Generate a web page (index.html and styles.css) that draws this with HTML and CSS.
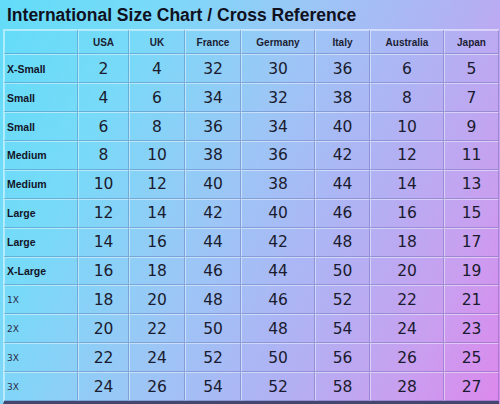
FILE: index.html
```html
<!DOCTYPE html>
<html>
<head>
<meta charset="utf-8">
<link rel="stylesheet" href="styles.css">
</head>
<body>
<div class="page">
  <h1 class="title">International Size Chart / Cross Reference</h1>
  <table class="chart">
    <colgroup>
      <col class="c-label"><col class="c-usa"><col class="c-uk"><col class="c-fr"><col class="c-de"><col class="c-it"><col class="c-au"><col class="c-jp">
    </colgroup>
    <thead>
      <tr><th></th><th>USA</th><th>UK</th><th>France</th><th>Germany</th><th>Italy</th><th>Australia</th><th>Japan</th></tr>
    </thead>
    <tbody>
      <tr><th>X-Small</th><td>2</td><td>4</td><td>32</td><td>30</td><td>36</td><td>6</td><td>5</td></tr>
      <tr><th>Small</th><td>4</td><td>6</td><td>34</td><td>32</td><td>38</td><td>8</td><td>7</td></tr>
      <tr><th>Small</th><td>6</td><td>8</td><td>36</td><td>34</td><td>40</td><td>10</td><td>9</td></tr>
      <tr><th>Medium</th><td>8</td><td>10</td><td>38</td><td>36</td><td>42</td><td>12</td><td>11</td></tr>
      <tr><th>Medium</th><td>10</td><td>12</td><td>40</td><td>38</td><td>44</td><td>14</td><td>13</td></tr>
      <tr><th>Large</th><td>12</td><td>14</td><td>42</td><td>40</td><td>46</td><td>16</td><td>15</td></tr>
      <tr><th>Large</th><td>14</td><td>16</td><td>44</td><td>42</td><td>48</td><td>18</td><td>17</td></tr>
      <tr><th>X-Large</th><td>16</td><td>18</td><td>46</td><td>44</td><td>50</td><td>20</td><td>19</td></tr>
      <tr><th class="plus">1X</th><td>18</td><td>20</td><td>48</td><td>46</td><td>52</td><td>22</td><td>21</td></tr>
      <tr><th class="plus">2X</th><td>20</td><td>22</td><td>50</td><td>48</td><td>54</td><td>24</td><td>23</td></tr>
      <tr><th class="plus">3X</th><td>22</td><td>24</td><td>52</td><td>50</td><td>56</td><td>26</td><td>25</td></tr>
      <tr><th class="plus">3X</th><td>24</td><td>26</td><td>54</td><td>52</td><td>58</td><td>28</td><td>27</td></tr>
    </tbody>
  </table>
</div>
</body>
</html>
```

FILE: styles.css
```css
html, body {
  margin: 0;
  padding: 0;
}
body {
  width: 500px;
  height: 404px;
  overflow: hidden;
  background: linear-gradient(115deg, #62dcf8 0%, #78daf8 22%, #9cc6f6 46%, #b0b2f4 66%, #c8a0f0 84%, #dc88ec 100%);
  font-family: "Liberation Sans", Arial, sans-serif;
}
.page {
  display: flex;
  flex-direction: column;
  height: 404px;
}
.title {
  margin: 0;
  height: 30px;
  box-sizing: border-box;
  padding: 4px 0 0 7px;
  font-size: 17.5px;
  line-height: 22px;
  font-weight: bold;
  color: #0f1020;
}
.chart {
  margin-left: 3px;
  width: 495px;
  table-layout: fixed;
  border-collapse: separate;
  border-spacing: 0;
  border-bottom: 3px solid #44466e;
  border-left: 1px solid rgba(255,255,255,0.5);
  border-top: 1px solid rgba(255,255,255,0.5);
}
.c-label { width: 74px; }
.c-usa { width: 51px; }
.c-uk { width: 56px; }
.c-fr { width: 56px; }
.c-de { width: 74px; }
.c-it { width: 55px; }
.c-au { width: 74px; }
.c-jp { width: 55px; }

.chart th, .chart td {
  padding: 0;
  box-shadow: inset -1px -1px 0 rgba(60, 80, 150, 0.3), inset 1px 1px 0 rgba(255, 255, 255, 0.45);
}
.chart thead th {
  height: 24px;
  font-size: 10px;
  font-weight: bold;
  color: #1b1d33;
  text-align: center;
}
.chart tbody th,
.chart tbody td {
  height: 28.9px;
}
.chart tbody th {
  text-align: left;
  padding-left: 3px;
  font-size: 10.5px;
  font-weight: bold;
  color: #131528;
}
.chart tbody th.plus {
  font-family: "DejaVu Sans", Verdana, sans-serif;
  font-weight: normal;
  font-size: 9px;
  color: #2a2c48;
}
.chart td {
  text-align: center;
  font-family: "DejaVu Sans", Verdana, sans-serif;
  font-size: 15.5px;
  color: #1a1b2e;
}
```
